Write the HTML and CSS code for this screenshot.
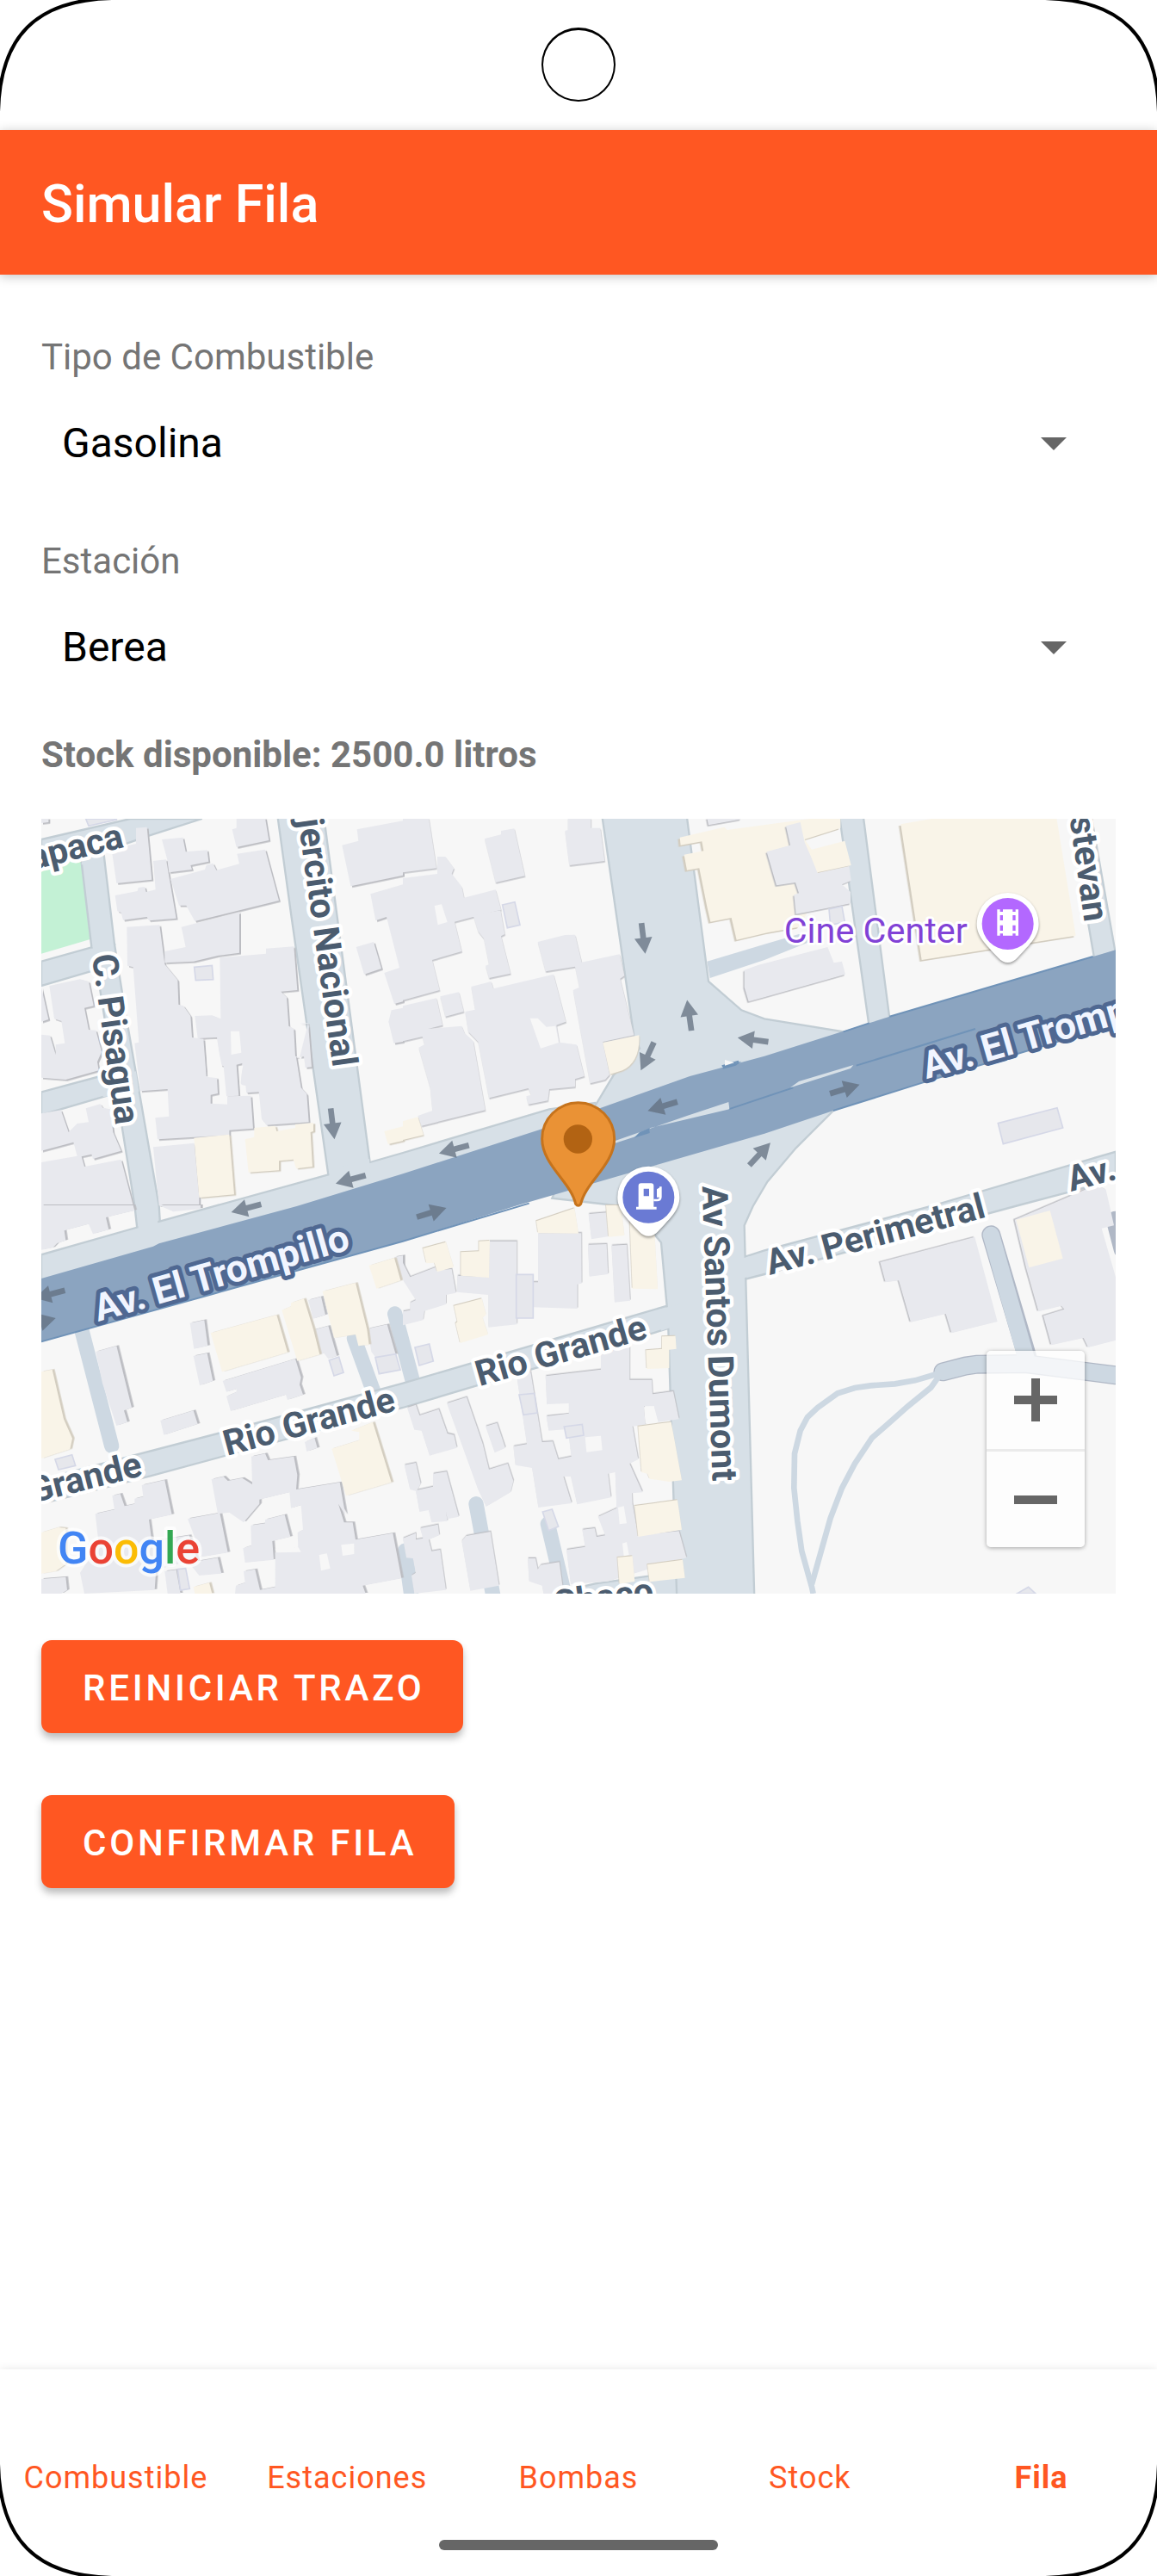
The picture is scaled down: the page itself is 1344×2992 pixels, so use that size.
FILE: index.html
```html
<!DOCTYPE html>
<html lang="es">
<head>
<meta charset="utf-8">
<meta name="viewport" content="width=device-width, initial-scale=1">
<title>Simular Fila</title>
<link rel="stylesheet" href="styles.css">
</head>
<body>
<div class="screen">
  <div class="status"><span class="camera"></span></div>
  <header class="appbar"><h1 class="appbar-title">Simular Fila</h1></header>

  <main class="content">
    <div class="field">
      <label class="field-label" for="fuel">Tipo de Combustible</label>
      <div class="spinner">
        <select class="spinner-select" id="fuel"><option>Gasolina</option></select>
        <svg class="spinner-arrow" viewBox="0 0 30 15" aria-hidden="true"><path d="M0 0h30L15 15z"/></svg>
      </div>
    </div>
    <div class="field">
      <label class="field-label" for="station">Estación</label>
      <div class="spinner">
        <select class="spinner-select" id="station"><option>Berea</option></select>
        <svg class="spinner-arrow" viewBox="0 0 30 15" aria-hidden="true"><path d="M0 0h30L15 15z"/></svg>
      </div>
    </div>
    <p class="stock">Stock disponible: 2500.0 litros</p>

    <div class="map">
      <svg class="map-canvas" viewBox="0 0 3744 2700" preserveAspectRatio="xMidYMid slice">
        <defs>
          <path id="arrow" d="M-54-10H-2V-31L54 0L-2 31V10H-54Z"/>
          <path id="poi" d="M-108 0A108 108 0 1 1 108 0C108 42 80 68 34 118C14 141-14 141-34 118C-80 68-108 42-108 0Z"/>
        </defs>
        <rect class="land" width="3744" height="2700"/>
        <path class="park" d="M0 130L135 120L170 420L0 470Z"/>

        <!-- outlined paths of the park on the right -->
        <g class="path-edge">
          <path d="M3310 1450L3435 1872"/>
          <path d="M3142 1927L3220 1907L3260 1901L3430 1899L3744 1939"/>
          <path d="M3744 1400L3770 1500"/>
        </g>
        <g class="path-fill">
          <path d="M3310 1450L3435 1890"/>
          <path d="M3142 1927L3220 1907L3260 1901L3430 1899L3744 1939"/>
        </g>
        <g class="trail">
          <path d="M3120 1935L3045 1957L2975 1969L2890 1975L2835 1983L2775 2002L2705 2052L2670 2085L2645 2132L2625 2212L2623 2332L2635 2447L2650 2552L2685 2677L2690 2700"/>
          <path d="M3130 1940L3100 1982L3020 2047L2950 2109L2895 2157L2835 2247L2790 2332L2750 2437L2685 2667"/>
        </g>
        <g class="lane">
          <path d="M142 1787L245 2185"/>
          <path d="M1232 1725L1297 1970"/>
          <path d="M1090 1810L1157 1995"/>
          <path d="M1515 2387L1575 2710"/>
          <path d="M1765 2457L1825 2710"/>
          <path d="M1268 2550L1290 2710"/>
        </g>
        <path class="lane-area" d="M2320 497L2520 437L2640 402L2720 412L2520 492L2330 555Z"/>

        <!-- streets -->
        <g class="street">
          <path d="M0 72L310 0H560L375 59L215 115L135 140L0 165Z"/>
          <path d="M0 497L180 447L255 440L230 515L0 582Z"/>
          <path d="M0 952L250 885L280 950L0 1032Z"/>
          <path d="M135 110L215 100L255 437L290 657L410 1347L418 1480L340 1480L325 1347L200 567L175 447Z"/>
          <path d="M824 -4H985L1145 1197L1160 1340L1010 1340L1000 1240L870 330Z"/>
          <path d="M0 1519L340 1422L415 1402L1000 1240L1145 1197L1260 1164L1770 1012L1930 990L2000 1080L0 1680Z"/>
          <path d="M0 2302L615 2142L1260 1967L2205 1690V1770L1260 2052L380 2290L0 2387Z"/>
          <path d="M2430 1533L2520 1504L3100 1350L3744 1160V1258L3405 1347L2520 1587L2430 1610Z"/>
          <path d="M1780 2700L1930 2665L2250 2620V2720H1780Z"/>
          <path d="M2782-4H2865L2956 695L2885 725Z"/>
          <path d="M3585-4H3660L3742 460L3670 490Z"/>
          <path d="M1955-4L2065 757L2085 800L1995 892L1900 1050L1780 1322L2000 1347L2130 1440L2160 1477L2180 1697L2185 1777L2205 2420L2215 2720H2485L2455 1610L2450 1417L2480 1350L2530 1265L2630 1147L2760 1017L2850 850L2795 742L2520 697L2440 667L2325 567L2250-4Z"/>
        </g>
        <!-- junction overlaps without kerb lines -->
        <g class="street-join">
          <path d="M145 125L212 115L216 150L140 160Z"/>
          <path d="M172 452L250 448L262 500L180 530Z"/>
          <path d="M205 905L330 880L340 950L215 970Z"/>
          <path d="M335 1400L405 1390L410 1480L345 1480Z"/>
          <path d="M1002 1225L1143 1185L1150 1300L1010 1320Z"/>
          <path d="M2150 1710L2230 1690V1760L2160 1784Z"/>
          <path d="M2420 1538L2470 1524V1595L2420 1605Z"/>
        </g>

        <!-- avenue -->
        <path class="avenue" d="M0 1602L390 1490L410 1480L890 1350L1260 1237L1740 1082L2260 897L2520 827L2885 712L2956 689L3665 480L3744 457V715L3070 920L2760 1017L2520 1097L1900 1277L1660 1347L1260 1472L600 1655L0 1822Z"/>
        <path class="avenue-line" d="M0 1822L600 1655L1260 1472L1700 1340M2760 1017L3070 920L3744 715M2795 742L2885 712M2956 689L3665 480M2372 862L2430 845M2840 860L3255 732M2395 1012L2620 937"/>
        <path class="median" d="M2000 1122L2250 1035L2395 987L2398 1012L2120 1078L2118 1092L2000 1130Z"/>
        <path class="median" d="M2610 937L2640 915L2830 858L2820 870Z"/>
        <path class="avenue-dark" d="M2085 1092L2120 1078V1095L2065 1112Z"/>
        <path class="avenue-dark" d="M2375 862L2440 845L2420 860L2375 872Z"/>
        <path class="land" d="M2382 840L2415 850L2382 860Z"/>

        <!-- buildings, north west -->
        <g class="houses shade-se" transform="translate(0,-3)">
          <path d="M245 110L330 90V35L368 32L385 215L262 228Z"/>
          <path d="M420 75L493 68L503 118L578 112L583 152L520 165L525 180L445 190L440 150Z"/>
          <path d="M390 150L435 145L470 350L375 358L368 345L285 356L278 330L265 325L257 270L335 255L338 243L360 240L365 258L398 250Z"/>
          <path d="M450 213L570 180L575 165L598 158L610 182L690 160L682 125L780 110L828 288L535 360L505 305L480 305Z"/>
          <path d="M665 40L680 35V0H780L793 78L680 102Z"/>
          <path d="M488 380L690 328V470L615 480L530 500L430 505V465L503 450Z"/>
          <path d="M298 380L412 373L430 510L475 565L478 650L495 655L520 690L525 765L565 770L575 900L612 905L615 960L590 965V995L648 998V970L730 968L738 1082L655 1088L655 1105L405 1120L397 1045L445 1040L440 945L345 952L325 785L340 782L320 520L300 515Z"/>
          <path d="M622 487L783 473V455L880 448L892 600L835 605L855 625L862 725L880 735L885 830L900 835L930 715L898 715L930 718L942 868L920 870L915 832L888 835L905 940L925 962L932 1060L785 1070L768 1050L758 955L715 958L695 925L700 855L680 860L688 968L645 970L635 865L625 862L612 765L545 768L535 690L595 688L625 700Z"/>
          <path d="M390 1147L533 1133L550 1320V1350H410Z"/>
          <path d="M28 585L135 562L165 570L182 655L150 662L165 738L190 740L210 815L195 850L200 880L85 912L0 905V755L30 758L50 825V790L82 785L70 708L45 700Z"/>
          <path d="M0 590L25 702L0 710Z"/>
          <path d="M0 1030L68 1018L95 1095L125 1065L165 1060L155 1012L205 997L215 1010L240 1015L250 1095L278 1160L180 1188L175 1172L140 1180L150 1215L278 1190L320 1350H0V1200L125 1178L112 1130L0 1160Z"/>
          <path d="M1048 95L1105 80L1100 40L1260 10V200L1078 238Z"/>
          <path d="M1147 265L1260 232V640L1230 648L1195 540L1248 522L1203 345L1165 358Z"/>
          <path d="M1097 450L1158 432L1185 525L1125 545Z"/>
          <path d="M1220 670L1260 662V780L1228 785L1210 710Z"/>
          <path d="M0 0H25V15L0 18Z"/>
        </g>
        <path class="yard" d="M660 740H690L697 815L662 822ZM573 770L610 768L630 865L612 903L580 900ZM688 862L703 860L690 925L712 930L715 960L695 965Z"/>
        <g class="shops shade-se-warm" transform="translate(0,-3)">
          <path d="M532 1115L655 1103L672 1312L550 1323Z"/>
          <path d="M710 1120L742 1112V1080L815 1073L820 1092L885 1080V1068L948 1062V1092L938 1095L945 1215L888 1222L878 1190L828 1195V1228L722 1235Z"/>
          <path d="M1195 1092L1260 1075V1125L1208 1137Z"/>
        </g>
        <g class="pool">
          <path d="M533 517L595 511L599 560L538 563Z"/>
          <path d="M155 0L165 25L262 3L262 0Z"/>
          <path d="M1607 300L1650 290L1668 370L1624 380Z"/>
        </g>

        <!-- buildings, north centre -->
        <g class="houses shade-s" transform="translate(1260,-3)">
          <path d="M0 0H90L117 175L0 190Z"/>
          <path d="M0 210L120 195V135H148L178 175L170 195L205 240L213 278L323 250L342 320L245 345L180 362L205 465L102 495L128 600L0 635Z"/>
          <path d="M285 72L342 58V45L388 37L425 202L323 225Z"/>
          <path d="M575 0H655V35H688L703 150L580 165L565 45L575 42Z"/>
          <path d="M245 340L340 322L355 405L342 412L375 542L300 558L288 515L300 510L282 420L262 395Z"/>
          <path d="M470 432L565 408L600 407L623 503L755 475L772 550L757 560L805 757L697 780L720 895L705 912L652 925L593 600L615 590L600 518L497 535Z"/>
          <path d="M238 588L308 570L315 595L525 545L568 710L535 722L545 782L605 790L632 900L600 910V937L510 945L505 985L437 998L430 970L447 965L437 942L300 976L262 780L228 745L217 675L252 668Z"/>
          <path d="M130 622L195 607L212 675L148 692Z"/>
          <path d="M0 655L117 628L138 722L88 735L205 725L215 750L245 778L287 1018L65 1073L52 1038L103 1020L95 940L55 800L75 790L68 762L0 778Z"/>
        </g>
        <path class="yard" d="M1703 695L1730 695L1760 725L1792 722L1803 780L1740 800ZM1370 303L1395 298L1415 360L1382 370ZM1840 730L1855 728L1875 785L1855 785Z"/>
        <g class="shops shade-s-warm" transform="translate(1260,-3)">
          <path d="M697 783L823 757Q828 850 765 880L722 893Z"/>
          <path d="M0 1057L52 1042L72 1105L0 1122Z"/>
        </g>

        <!-- buildings, north east -->
        <g class="shops shade-sw-warm" transform="translate(1260,-3)">
          <path d="M965 68L1120 32L1130 42L1440 0H1525V35L1400 75L1425 110L1540 80L1562 165L1445 190L1450 260L1380 380L1270 400L1163 425L1145 348L1072 362L1060 310L1033 175L990 182L980 128L1048 115L1042 82L968 95Z"/>
        </g>
        <g class="shops shade-sw-warm" transform="translate(2520,-3)">
          <path d="M475 22L600 0H1018L1085 410L548 495Z"/>
        </g>
        <g class="houses shade-sw" transform="translate(2520,-3)">
          <path d="M75 28L125 15L140 85L160 130L185 192L295 168L302 218L270 232L300 258V298L215 315L110 335L103 268L120 262L108 225L42 235L8 118L90 95Z"/>
          <path d="M-70 530L-20 512L220 450L242 505L270 500L282 545L0 625L-55 640L-70 590Z"/>
          <path d="M-200 0H-80L-85 5L-195 25Z"/>
        </g>
        <g class="pool">
          <path d="M2745 315L2790 305L2800 360L2750 370Z"/>
          <path d="M3334 1061L3540 1007L3560 1077L3352 1133Z"/>
          <path d="M3400 2700L3440 2677L3465 2700Z"/>
        </g>

        <!-- buildings, south west -->
        <g class="houses shade-ne" transform="translate(0,1347)">
          <path d="M0 0H320L325 18L225 42L235 85L180 100L165 65L80 88L85 122L55 132L40 148L0 155Z"/>
          <path d="M410 0H555V12L460 22Z"/>
          <path d="M190 510L262 490L315 705L288 715L300 755L262 768L213 620Z"/>
          <path d="M518 410L568 400L580 490L532 500Z"/>
          <path d="M530 525L578 515L598 612L552 628Z"/>
          <path d="M632 612L885 535L905 600L900 625L912 660L858 678L852 660L660 717L645 665L680 650V640L645 650Z"/>
          <path d="M415 750L530 715L545 762L427 800Z"/>
          <path d="M930 330L975 318L990 382L947 395Z"/>
          <path d="M945 435L1000 420L1030 525L1000 535L985 515L970 520Z"/>
          <path d="M1137 430L1205 415L1235 520L1165 530L1150 510Z"/>
          <path d="M1230 180L1260 175V260L1248 262Z"/>
          <path d="M918 825L952 810L962 845L925 858Z"/>
          <path d="M593 955L635 945L650 960L700 950L735 972L732 875L780 865L790 888L880 875L892 940L888 990L1040 965L1060 1080L1035 1040L1055 1105L1085 1105L1095 1165L1225 1142L1255 1300L1120 1325L1130 1353H675L678 1325L710 1315L705 1275L745 1268L762 1340L815 1330L815 1210L895 1192L893 1140L912 1130L905 1045L870 1055L865 1000L760 1025V1040L705 1105L655 1070L615 1075Z"/>
          <path d="M350 975L430 957L455 1078L375 1095L385 1170L515 1150L545 1240L615 1228L628 1283L550 1290L510 1240L400 1270L395 1340L150 1353L135 1280L200 1180L188 1075L255 1060L247 1012L275 1005L290 1048L325 1040V1022L355 1015Z"/>
          <path d="M510 1092L622 1072L650 1210L560 1225Z"/>
          <path d="M730 1115L780 1108V1095L848 1078L868 1155L805 1170L810 1235L710 1245L703 1195L732 1185Z"/>
          <path d="M0 1302L85 1295L90 1340L70 1353H0Z"/>
          <path d="M430 1275L470 1270L485 1353H440Z"/>
        </g>
        <path class="yard" d="M968 2565L995 2560L1007 2612L975 2620ZM1045 2530L1090 2525V2562L1050 2568ZM815 2545L895 2537L905 2555L820 2557Z"/>
        <g class="shops shade-ne-warm" transform="translate(0,1347)">
          <path d="M0 580L38 572L78 745L108 812L100 850L0 882Z"/>
          <path d="M0 1140L60 1122L85 1125V1250L50 1275L0 1283Z"/>
          <path d="M590 445L820 382L858 512L630 580Z"/>
          <path d="M838 365L870 352V340L915 325L948 432L970 520L892 542Z"/>
          <path d="M980 300L1095 270L1135 432L1142 485L1105 490L1095 450L1020 462Z"/>
          <path d="M1142 210L1230 183L1252 262L1168 290Z"/>
          <path d="M1012 848L1108 818V790L1080 785L1155 755L1220 965L1062 1012Z"/>
          <path d="M530 1330L585 1315L595 1353H535Z"/>
        </g>
        <g class="pool">
          <path d="M1003 1887L1037 1875L1053 1930L1020 1941Z"/>
          <path d="M48 2232L107 2216L119 2254L60 2268Z"/>
          <path d="M1164 1877L1235 1865L1251 1920L1177 1934Z"/>
          <path d="M475 2615L503 2612L517 2683L485 2688Z"/>
        </g>

        <!-- buildings, south centre -->
        <g class="houses shade-n" transform="translate(1260,1347)">
          <path d="M0 200L20 240L25 250L115 215L125 225L170 222L185 305L150 312V345L75 368L70 400L0 418V370L25 365V340L45 330L0 260Z"/>
          <path d="M190 245L300 250V125H397V415L298 425V312L188 302Z"/>
          <path d="M471 97H622L623 272L608 275V360L453 355V268H471Z"/>
          <path d="M647 30L712 25L718 108L657 118Z"/>
          <path d="M645 137L710 135L715 240L650 248Z"/>
          <path d="M727 140L780 137L792 332L738 338Z"/>
          <path d="M398 605L445 580L485 825L522 823L588 1038L472 1053L450 915L392 905L385 840L432 832Z"/>
          <path d="M497 595L690 572V515L790 490V608H867L870 658L942 648L962 745L890 755L875 700H840L845 765L800 770L820 885L790 900L835 1000L798 1003L800 1040L820 1150L962 1135L988 1228L715 1310L585 1320L570 1200L635 1190L625 1130L668 1125L675 1155L705 1150L680 1085L745 1055L740 930L715 935L725 1018L607 1042L585 945H547L540 885L587 875L575 780L508 785L500 735L578 725V692L502 695Z"/>
          <path d="M15 705L45 695L58 732L125 710L155 795L178 800L188 845L93 872L65 785L40 782Z"/>
          <path d="M153 690L222 668L278 830L300 920L365 900L385 960L375 1000L290 1050L262 990Z"/>
          <path d="M288 770L328 758L357 845L320 862Z"/>
          <path d="M5 905L45 897L62 970L50 992L105 980V935L152 928L195 1085L155 1093L150 1065L155 1100L100 1105L90 1062L58 1068L45 995L25 990Z"/>
          <path d="M60 1125L122 1112L127 1150L90 1165L100 1205L130 1200L150 1340L40 1353L30 1290L45 1280L35 1230L12 1228L0 1160L45 1142V1165L70 1160Z"/>
          <path d="M205 1170L220 1152L305 1137L335 1325L235 1343Z"/>
          <path d="M435 1230H462L470 1268L480 1253L545 1243L560 1353H490L485 1325L440 1310Z"/>
        </g>
        <path class="yard" d="M1895 2155L1950 2150L1955 2200L1900 2207ZM1762 2040L1838 2037V2070L1764 2075ZM2010 2400L2030 2395L2040 2455L2015 2458ZM2025 2525L2040 2520L2048 2565L2030 2570ZM2100 2050L2135 2047L2142 2100L2105 2107Z"/>
        <g class="shops shade-n-warm" transform="translate(1260,1347)">
          <path d="M465 55L598 10L612 98L471 97Z"/>
          <path d="M708 0H760L772 105L717 110Z"/>
          <path d="M790 40L875 60L888 292L800 290Z"/>
          <path d="M70 150L150 128L177 215L120 232L110 200L82 202Z"/>
          <path d="M202 163L265 160V125L303 123L300 252L202 245Z"/>
          <path d="M178 350L275 325L290 380L278 392L297 450L200 480L184 412L190 405Z"/>
          <path d="M903 457L950 455L953 500L928 503V567L850 570L847 505L903 500Z"/>
          <path d="M820 770L935 755L972 958L928 963L860 953L852 935L832 930Z"/>
          <path d="M808 1047L957 1027L972 1130L820 1155Z"/>
          <path d="M748 1227L800 1222L808 1310L755 1320Z"/>
          <path d="M852 1252L975 1235L983 1298L860 1312Z"/>
        </g>
        <g class="pool">
          <path d="M1655 1588H1714V1740H1655Z"/>
          <path d="M1302 1842L1352 1830L1366 1890L1317 1905Z"/>
          <path d="M1665 2007L1718 2002L1728 2070L1680 2077Z"/>
          <path d="M1822 2118L1885 2110L1890 2148L1830 2158Z"/>
          <path d="M1747 2415L1780 2406L1802 2466L1768 2480Z"/>
        </g>

        <!-- buildings, south east -->
        <g class="houses shade-w" transform="translate(2520,1347)">
          <path d="M403 198L733 110L812 405L652 445L632 378L510 407L468 262L422 268Z"/>
          <path d="M872 50L1130-60L1130-85L1190-55L1218 70L1175 80L1224 250V470L1128 495L1112 462L1000 487L972 385L1045 362L1035 350L955 370L912 218Z"/>
        </g>
        <g class="shops" transform="translate(2520,1347)"><path d="M877 50L995 18L1040 185L922 217Z"/></g>

        <g class="arrows">
          <use href="#arrow" transform="translate(1015,1063) rotate(83)"/>
          <use href="#arrow" transform="translate(1078,1257) rotate(165)"/>
          <use href="#arrow" transform="translate(714,1357) rotate(165)"/>
          <use href="#arrow" transform="translate(30,1657) rotate(165)"/>
          <use href="#arrow" transform="translate(-2,1754) rotate(-15)"/>
          <use href="#arrow" transform="translate(1438,1152) rotate(165)"/>
          <use href="#arrow" transform="translate(1360,1372) rotate(-17)"/>
          <use href="#arrow" transform="translate(2098,417) rotate(83)"/>
          <use href="#arrow" transform="translate(2258,685) rotate(-98)"/>
          <use href="#arrow" transform="translate(2112,828) rotate(115)"/>
          <use href="#arrow" transform="translate(2165,1002) rotate(163)"/>
          <use href="#arrow" transform="translate(2480,770) rotate(188)"/>
          <use href="#arrow" transform="translate(2504,1168) rotate(-47)"/>
          <use href="#arrow" transform="translate(2800,942) rotate(-17)"/>
        </g>

        <g class="road-name">
          <text transform="translate(292,98) rotate(-14)" text-anchor="end">apaca</text>
          <text transform="translate(176,477) rotate(82)">C. Pisagua</text>
          <text transform="translate(1016,868) rotate(82)" text-anchor="end">jercito Nacional</text>
          <text transform="translate(3635,362) rotate(82)" text-anchor="end">stevan</text>
          <text transform="translate(357,2288) rotate(-14)" text-anchor="end">Grande</text>
          <text transform="translate(647,2220) rotate(-15)">Rio Grande</text>
          <text transform="translate(1527,1978) rotate(-16)">Rio Grande</text>
          <text transform="translate(2303,1280) rotate(88)">Av Santos Dumont</text>
          <text transform="translate(2538,1590) rotate(-15)">Av. Perimetral</text>
          <text transform="translate(3588,1299) rotate(-15)">Av.</text>
          <text transform="translate(1790,2778) rotate(-8)">Chaco</text>
        </g>
        <g class="avenue-name">
          <text transform="translate(198,1752) rotate(-16)">Av. El Trompillo</text>
          <text transform="translate(3085,907) rotate(-16)">Av. El Trompillo</text>
        </g>
        <text class="poi-name" x="2588" y="432">Cine Center</text>

        <g transform="translate(3368,366)">
          <use class="poi-back" href="#poi"/>
          <circle class="cinema" r="90"/>
          <path class="glyph" fill-rule="evenodd" d="M-37-50h10v8h10v-8h34v8h10v-8h10v91h-10v-7h-10v7h-34v-7h-10v7h-10zM-27-30v18h10v-18zM-27 5v19h10V5zM17-30v18h10v-18zM17 5v19h10V5z"/>
        </g>
        <g transform="translate(2116,1319)">
          <use class="poi-back" href="#poi"/>
          <circle class="gas" r="90"/>
          <path class="glyph" fill-rule="evenodd" d="M-35-40q0-9 9-9h35q9 0 9 9v73h10v9h-71v-9h8zM-17-30v26H2v-26z"/>
          <path class="hose" d="M18 10h12q12 0 12-12v-35"/>
          <path class="glyph" d="M29-28l10-6v34H29z"/>
        </g>
        <path class="marker" d="M1871 989A126 126 0 0 1 1997 1115C1997 1205 1897 1265 1880 1342Q1871 1354 1862 1342C1845 1265 1745 1205 1745 1115A126 126 0 0 1 1871 989Z"/>
        <circle class="marker-dot" cx="1870" cy="1116" r="50"/>

        <text class="brand" x="57" y="2594"><tspan class="blue">G</tspan><tspan class="red">o</tspan><tspan class="yellow">o</tspan><tspan class="blue">g</tspan><tspan class="green">l</tspan><tspan class="red">e</tspan></text>
      </svg>
      <div class="zoom">
        <button class="zoom-button" type="button" aria-label="Acercar"><svg class="zoom-icon" viewBox="0 0 50 50"><path d="M20 0h10v20h20v10H30v20H20V30H0V20h20z"/></svg></button>
        <button class="zoom-button" type="button" aria-label="Alejar"><svg class="zoom-icon" viewBox="0 0 50 50"><path d="M0 20h50v10H0z"/></svg></button>
      </div>
    </div>

    <div class="actions">
      <button class="action" type="button">REINICIAR TRAZO</button>
      <button class="action" type="button">CONFIRMAR FILA</button>
    </div>
  </main>

  <footer class="bottom">
    <nav class="tabs">
      <a class="tab" href="#combustible">Combustible</a>
      <a class="tab" href="#estaciones">Estaciones</a>
      <a class="tab" href="#bombas">Bombas</a>
      <a class="tab" href="#stock">Stock</a>
      <a class="tab tab-active" href="#fila" aria-current="page">Fila</a>
    </nav>
    <span class="home-bar"></span>
  </footer>

  <svg class="corner corner-tl" viewBox="0 0 130 130" aria-hidden="true"><path d="M-2 130C0 42 42 0 130-2"/></svg>
  <svg class="corner corner-tr" viewBox="0 0 130 130" aria-hidden="true"><path d="M-2 130C0 42 42 0 130-2"/></svg>
  <svg class="corner corner-bl" viewBox="0 0 130 130" aria-hidden="true"><path d="M-2 130C0 42 42 0 130-2"/></svg>
  <svg class="corner corner-br" viewBox="0 0 130 130" aria-hidden="true"><path d="M-2 130C0 42 42 0 130-2"/></svg>
</div>
</body>
</html>
```
FILE: styles.css
```css
* { box-sizing: border-box; }

body {
  margin: 0;
  background: #fff;
  font-family: Roboto, "Noto Sans", sans-serif;
  color: #000;
}

.screen {
  position: relative;
  display: flex;
  flex-direction: column;
  min-height: 100vh;
}

/* status area and app bar */
.status {
  display: flex;
  justify-content: center;
  height: 151px;
  padding-top: 32px;
}
.camera {
  width: 86px;
  height: 86px;
  border: 2px solid #000;
  border-top-width: 3px;
  border-radius: 50%;
}
.appbar {
  display: flex;
  align-items: center;
  height: 168px;
  padding: 4px 48px 0;
  background: #ff5722;
  box-shadow: 0 2px 12px rgba(0, 0, 0, .24);
}
.appbar-title {
  margin: 0;
  font-size: 61px;
  line-height: 72px;
  font-weight: 500;
  color: #fff;
}

/* form */
.content {
  flex: 1;
  display: flex;
  flex-direction: column;
  padding: 72px 48px;
}
.field {
  display: flex;
  flex-direction: column;
}
.field + .field { margin-top: 37px; }
.field-label,
.stock {
  font-size: 42px;
  line-height: 48px;
  color: #757575;
}
.stock {
  margin: 25px 0 50px;
  font-weight: 700;
}
.spinner {
  display: grid;
  align-items: center;
}
.spinner-select {
  grid-area: 1 / 1;
  height: 152px;
  padding: 0 24px;
  border: 0;
  background: none;
  appearance: none;
  font: 400 48px/56px Roboto, "Noto Sans", sans-serif;
  color: #000;
}
.spinner-arrow {
  grid-area: 1 / 1;
  justify-self: end;
  width: 30px;
  height: 15px;
  margin-right: 57px;
  fill: #666;
  pointer-events: none;
}

/* map */
.map {
  position: relative;
  height: 900px;
  overflow: hidden;
}
.map-canvas {
  display: block;
  width: 100%;
  height: 100%;
}
.land, .yard { fill: #f7f7f7; }
.park { fill: #c3f1d5; }
.street { fill: #d7e0e7; stroke: #c2cdd4; stroke-width: 7; }
.street-join { fill: #d7e0e7; }
.lane { fill: none; stroke: #cdd8e2; stroke-width: 52; stroke-linecap: round; }
.lane-area { fill: #cdd8e2; }
.path-edge { fill: none; stroke: #b0b8c6; stroke-width: 66; stroke-linecap: round; }
.path-fill { fill: none; stroke: #cdd8e2; stroke-width: 58; stroke-linecap: round; }
.trail { fill: none; stroke: #cdd8e2; stroke-width: 20; }
.avenue { fill: #8ba4c0; }
.avenue-line { fill: none; stroke: #7093b8; stroke-width: 6; }
.avenue-dark { fill: #7093b8; }
.median { fill: #d7e0e7; }
.houses { fill: #e8e9ee; }
.shops { fill: #f9f4e8; }
.shade-se { filter: drop-shadow(6px 5px 0 #bcbdc2); }
.shade-s { filter: drop-shadow(2px 5px 0 #c4c5ca); }
.shade-sw { filter: drop-shadow(-4px 5px 0 #bcbdc2); }
.shade-ne { filter: drop-shadow(8px -3px 0 #bcbdc2); }
.shade-n { filter: drop-shadow(2px -4px 0 #bcbdc2); }
.shade-w { filter: drop-shadow(-5px -2px 0 #bcbdc2); }
.shade-se-warm { filter: drop-shadow(7px 4px 0 #d3cdc0); }
.shade-s-warm { filter: drop-shadow(2px 4px 0 #d3cdc0); }
.shade-sw-warm { filter: drop-shadow(-7px 6px 0 #d3cdc0); }
.shade-ne-warm { filter: drop-shadow(8px -2px 0 #d3cdc0); }
.shade-n-warm { filter: drop-shadow(-2px -3px 0 #d3cdc0); }
.pool { fill: #e6e7ec; stroke: #d5d8e7; stroke-width: 5; }
.arrows { fill: #616f7f; fill-opacity: .75; }

.road-name, .avenue-name, .poi-name {
  stroke-linejoin: round;
  paint-order: stroke;
}
.road-name { font-size: 124px; font-weight: 700; fill: #4b5c6f; stroke: #fff; stroke-width: 26px; }
.avenue-name { font-size: 132px; font-weight: 700; fill: #f1f5ff; stroke: #4f6892; stroke-width: 30px; }
.poi-name { font-size: 124px; fill: #8142d6; stroke: #fff; stroke-width: 18px; }

.poi-back { fill: #fff; filter: drop-shadow(0 5px 5px rgba(0, 0, 0, .4)); }
.cinema { fill: #b368ff; }
.gas { fill: #6a7ad4; }
.glyph { fill: #fff; }
.hose { fill: none; stroke: #fff; stroke-width: 8; }
.marker { fill: #ea9235; stroke: #c6731c; stroke-width: 9; }
.marker-dot { fill: #b26313; }

.brand {
  font-size: 156px;
  font-weight: 500;
  stroke: rgba(255, 255, 255, .7);
  stroke-width: 24px;
  stroke-linejoin: round;
  paint-order: stroke;
}
.blue { fill: #4285f4; }
.red { fill: #ea4335; }
.yellow { fill: #fbbc05; }
.green { fill: #34a853; }

/* zoom control, floating over the map */
.zoom {
  position: absolute;
  right: 36px;
  bottom: 54px;
  display: flex;
  flex-direction: column;
  width: 114px;
  border-radius: 5px;
  background: rgba(255, 255, 255, .75);
  box-shadow: 0 1px 5px rgba(0, 0, 0, .35);
}
.zoom-button {
  display: flex;
  align-items: center;
  justify-content: center;
  height: 114px;
  padding: 0;
  border: 0;
  background: none;
}
.zoom-button + .zoom-button { border-top: 3px solid #ebebeb; }
.zoom-icon {
  width: 50px;
  height: 50px;
  fill: #666;
}

/* buttons */
.actions {
  display: flex;
  flex-direction: column;
  align-items: flex-start;
  gap: 72px;
  margin-top: 54px;
}
.action {
  height: 108px;
  padding: 3px 44px 0 48px;
  border: 0;
  border-radius: 12px;
  background: #ff5722;
  box-shadow: 0 6px 8px rgba(0, 0, 0, .26);
  font: 500 42px/48px Roboto, "Noto Sans", sans-serif;
  letter-spacing: .09em;
  color: #fff;
}

/* bottom navigation */
.bottom {
  display: flex;
  flex-direction: column;
  align-items: center;
  gap: 48px;
  padding: 102px 0 30px;
  background: #fff;
  box-shadow: 0 0 10px rgba(0, 0, 0, .1);
}
.tabs {
  display: grid;
  grid-template-columns: repeat(5, 1fr);
  width: 100%;
}
.tab {
  font-size: 36px;
  line-height: 48px;
  letter-spacing: 1px;
  text-align: center;
  text-decoration: none;
  color: #ff5722;
}
.tab-active { font-weight: 700; }
.home-bar {
  width: 324px;
  height: 12px;
  border-radius: 6px;
  background: #666;
}

/* rounded screen outline */
.corner {
  position: absolute;
  width: 130px;
  height: 130px;
  fill: none;
  stroke: #000;
  stroke-width: 4;
  pointer-events: none;
}
.corner-tl { top: 0; left: 0; }
.corner-tr { top: 0; right: 0; transform: scaleX(-1); }
.corner-bl { bottom: 0; left: 0; transform: scaleY(-1); }
.corner-br { bottom: 0; right: 0; transform: scale(-1, -1); }
```
